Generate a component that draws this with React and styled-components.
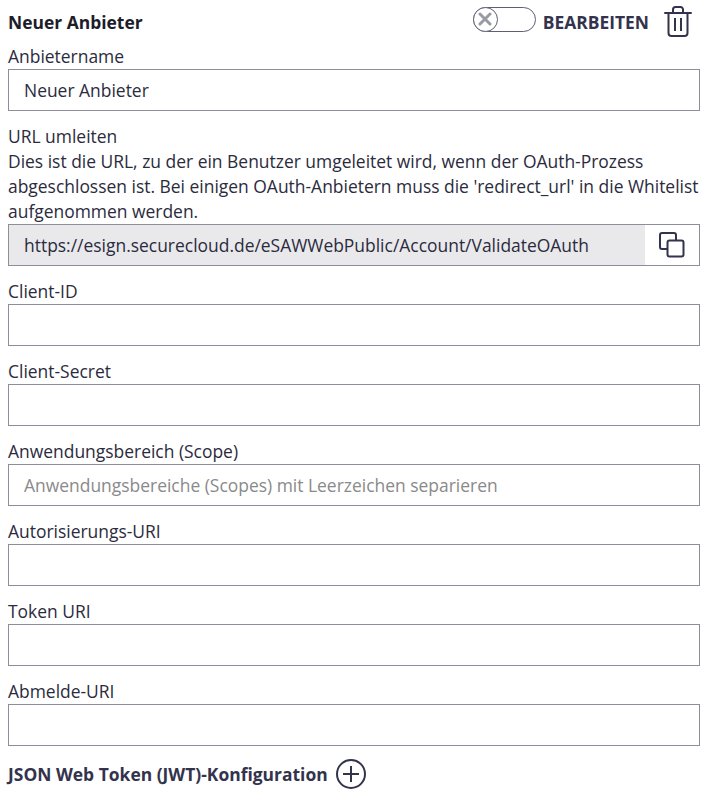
import styled, { createGlobalStyle } from "styled-components";

const GlobalStyle = createGlobalStyle`
  html, body {
    margin: 0;
    padding: 0;
    background: #fff;
  }
  body {
    font-family: "Open Sans", "Liberation Sans", sans-serif;
    font-size: 17.44px;
    color: #2b2b3d;
  }
`;
const Page = styled.div`
  width: 708px;
  height: 792px;
  overflow: hidden;
  box-sizing: border-box;
  padding: 0 8px;
`;
const Header = styled.div`
  display: flex;
  align-items: center;
  justify-content: space-between;
  height: 43px;
  margin-bottom: 1px;
`;
const Title = styled.h2`
  margin: 0;
  font-size: 17.44px;
  font-weight: 700;
  color: #1c1c2b;
`;
const Actions = styled.div`
  display: flex;
  align-items: center;
  padding-right: 8px;
`;
const Toggle = styled.div`
  width: 63px;
  height: 25px;
  box-sizing: border-box;
  border: 1px solid #5f5f73;
  border-radius: 13px;
  display: flex;
  align-items: center;
  margin-right: 7px;
  margin-top: -5px;
`;
const Knob = styled.div`
  width: 25px;
  height: 25px;
  margin-left: -1px;
  box-sizing: border-box;
  border: 1px solid #5f5f73;
  border-radius: 50%;
  background: #fff;
  display: flex;
  align-items: center;
  justify-content: center;
`;
const ToggleText = styled.span`
  font-size: 17.44px;
  font-weight: 700;
  color: #33334d;
  margin-right: 15px;
`;
const Field = styled.div`
  margin-bottom: 13px;
`;
const Label = styled.label`
  display: block;
  font-size: 17.44px;
  line-height: 25px;
  color: #2b2b3d;
`;
const Help = styled.p`
  margin: 0;
  font-size: 17.44px;
  line-height: 25px;
  color: #2b2b3d;
  white-space: nowrap;
`;
const Input = styled.input`
  display: block;
  width: 100%;
  height: 42px;
  box-sizing: border-box;
  border: 1px solid #8e8e9a;
  border-radius: 0;
  padding: 0 15px;
  font-family: inherit;
  font-size: 17.44px;
  color: #2b2b3d;
  background: #fff;
  outline: none;
  &::placeholder {
    color: #8a8a8a;
    opacity: 1;
  }
`;
const CopyRow = styled.div`
  display: flex;
  height: 42px;
  box-sizing: border-box;
  border: 1px solid #8e8e9a;
`;
const ReadOnly = styled.div`
  flex: 1;
  background: #e9e9ec;
  padding: 0 15px;
  display: flex;
  align-items: center;
  font-size: 17.44px;
  color: #2b2b3d;
`;
const CopyButton = styled.div`
  width: 54px;
  display: flex;
  align-items: center;
  justify-content: center;
`;
const Section = styled.div`
  display: flex;
  align-items: center;
  gap: 8px;
  margin-top: 1px;
`;
const SectionTitle = styled.span`
  font-size: 17.44px;
  font-weight: 700;
  color: #33334d;
`;

const TrashIcon = () => (
  <svg width="28" height="31" viewBox="0 0 28 31" fill="none" stroke="#33334d" strokeWidth="2">
    <path d="M1 7h26" strokeLinecap="round" />
    <path d="M9 7V3.5A2.5 2.5 0 0 1 11.500 1h5A2.500 2.500 0 0 1 19 3.500V7" />
    <path d="M4.500 7v20a3 3 0 0 0 3 3h13a3 3 0 0 0 3-3V7" />
    <path d="M11 12v13M17 12v13" />
  </svg>
);

const CopyIcon = () => (
  <svg width="26" height="26" viewBox="0 0 26 26" fill="none" stroke="#33334d" strokeWidth="2">
    <path d="M8 17H3a2 2 0 0 1-2-2V3a2 2 0 0 1 2-2h12a2 2 0 0 1 2 2v5" />
    <rect x="8.500" y="8.500" width="16" height="16" rx="2" />
  </svg>
);

const fields = [
  { label: "Client-ID" },
  { label: "Client-Secret" },
  {
    label: "Anwendungsbereich (Scope)",
    placeholder: "Anwendungsbereiche (Scopes) mit Leerzeichen separieren",
  },
  { label: "Autorisierungs-URI" },
  { label: "Token URI" },
  { label: "Abmelde-URI" },
];

export default function App() {
  return (
    <Page>
      <GlobalStyle />
      <Header>
        <Title>Neuer Anbieter</Title>
        <Actions>
          <Toggle>
            <Knob>
              <svg width="14" height="14" viewBox="0 0 14 14" stroke="#9a9aa5" strokeWidth="3" strokeLinecap="round">
                <path d="M2 2l10 10M12 2L2 12" />
              </svg>
            </Knob>
          </Toggle>
          <ToggleText>BEARBEITEN</ToggleText>
          <TrashIcon />
        </Actions>
      </Header>
      <Field>
        <Label>Anbietername</Label>
        <Input defaultValue="Neuer Anbieter" />
      </Field>
      <Field>
        <Label>URL umleiten</Label>
        <Help>
          Dies ist die URL, zu der ein Benutzer umgeleitet wird, wenn der OAuth-Prozess
          <br />
          abgeschlossen ist. Bei einigen OAuth-Anbietern muss die 'redirect_url' in die Whitelist
          <br />
          aufgenommen werden.
        </Help>
        <CopyRow>
          <ReadOnly>https://esign.securecloud.de/eSAWWebPublic/Account/ValidateOAuth</ReadOnly>
          <CopyButton>
            <CopyIcon />
          </CopyButton>
        </CopyRow>
      </Field>
      {fields.map((f) => (
        <Field key={f.label}>
          <Label>{f.label}</Label>
          <Input placeholder={f.placeholder} />
        </Field>
      ))}
      <Section>
        <SectionTitle>JSON Web Token (JWT)-Konfiguration</SectionTitle>
        <svg width="30" height="30" viewBox="0 0 30 30" fill="none" stroke="#33334d" strokeWidth="2">
          <circle cx="15" cy="15" r="14" />
          <path d="M15 7v16M7 15h16" />
        </svg>
      </Section>
    </Page>
  );
}
